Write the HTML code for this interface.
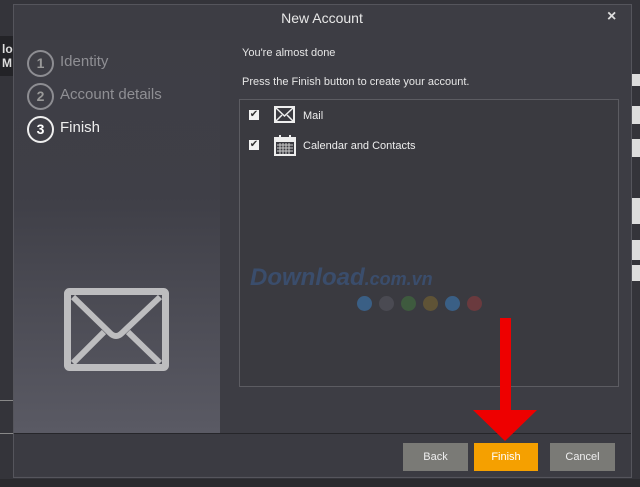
<!DOCTYPE html>
<html><head><style>
body{margin:0;width:640px;height:487px;background:#2b2b30;position:relative;overflow:hidden;font-family:"Liberation Sans",sans-serif;}
.a{position:absolute}
</style></head><body>
<div class="a" style="left:0;top:0;width:640px;height:487px;background:#34343a"></div>
<!-- background app bits -->
<div class="a" style="left:0;top:36px;width:14px;height:40px;background:#232327"></div>
<div class="a" style="left:2px;top:42px;color:#ddd;font-size:12px;font-weight:bold;line-height:14px">lo<br>M</div>
<div class="a" style="left:0;top:400px;width:14px;height:1px;background:#888"></div>
<div class="a" style="left:0;top:433px;width:14px;height:1px;background:#888"></div>
<div class="a" style="left:0;top:479px;width:640px;height:8px;background:#2a2a2e"></div>
<div class="a" style="left:631px;top:74px;width:9px;height:12px;background:#ddd"></div>
<div class="a" style="left:631px;top:106px;width:9px;height:18px;background:#ddd"></div>
<div class="a" style="left:631px;top:139px;width:9px;height:18px;background:#ddd"></div>
<div class="a" style="left:631px;top:198px;width:9px;height:26px;background:#ddd"></div>
<div class="a" style="left:631px;top:240px;width:9px;height:20px;background:#ddd"></div>
<div class="a" style="left:631px;top:265px;width:9px;height:16px;background:#ddd"></div>
<!-- dialog -->
<div class="a" style="left:13px;top:4px;width:617px;height:472px;background:#3d3d44;border:1px solid #55555c"></div>
<div class="a" style="left:13px;top:10px;width:618px;text-align:center;color:#e8e8e8;font-size:14px">New Account</div>
<div class="a" style="left:607px;top:8px;color:#ddd;font-size:16px;font-weight:bold">×</div>
<div class="a" style="left:14px;top:40px;width:206px;height:393px;background:linear-gradient(#3e3e45 0%,#3f3f47 40%,#5a5a64 100%)"></div>
<!-- steps -->
<div class="a" style="left:27px;top:50px;width:23px;height:23px;border:2px solid #8d8d92;border-radius:50%;color:#999;font-size:14px;font-weight:bold;text-align:center;line-height:23px">1</div>
<div class="a" style="left:60px;top:53px;color:#8f8f94;font-size:15px">Identity</div>
<div class="a" style="left:27px;top:83px;width:23px;height:23px;border:2px solid #8d8d92;border-radius:50%;color:#999;font-size:14px;font-weight:bold;text-align:center;line-height:23px">2</div>
<div class="a" style="left:60px;top:86px;color:#8f8f94;font-size:15px">Account details</div>
<div class="a" style="left:27px;top:116px;width:23px;height:23px;border:2px solid #eee;border-radius:50%;color:#fff;font-size:14px;font-weight:bold;text-align:center;line-height:23px">3</div>
<div class="a" style="left:60px;top:119px;color:#eee;font-size:15px">Finish</div>
<svg class="a" style="left:64px;top:288px" width="105" height="83" viewBox="0 0 105 83"><rect x="3.5" y="3.5" width="98" height="76" rx="2" fill="none" stroke="#bdbdbf" stroke-width="7"/><path d="M9 9 L46 45 Q52 51 58 45 L96 9 M9 75 L40 44 M96 75 L64 44" fill="none" stroke="#bdbdbf" stroke-width="6"/></svg>
<!-- right content -->
<div class="a" style="left:242px;top:47px;color:#e6e6e6;font-size:11px">You're almost done</div>
<div class="a" style="left:242px;top:76px;color:#e6e6e6;font-size:11px">Press the Finish button to create your account.</div>
<div class="a" style="left:239px;top:99px;width:378px;height:286px;border:1px solid #5c5c62;background:#3a3a40"></div>
<div class="a" style="left:249px;top:110px;width:10px;height:10px;background:#f2f2f2;color:#333;font-size:10px;line-height:10px;text-align:center">✔</div>
<svg class="a" style="left:274px;top:106px" width="21" height="17"><rect x="1" y="1" width="19" height="15" fill="none" stroke="#eee" stroke-width="2"/><path d="M2 2 L10.5 10 L19 2 M2 15 L8 9 M19 15 L13 9" stroke="#eee" stroke-width="1.5" fill="none"/></svg>
<div class="a" style="left:303px;top:110px;color:#eee;font-size:11px">Mail</div>
<div class="a" style="left:249px;top:140px;width:10px;height:10px;background:#f2f2f2;color:#333;font-size:10px;line-height:10px;text-align:center">✔</div>
<svg class="a" style="left:274px;top:135px" width="22" height="21"><rect x="1" y="3" width="20" height="17" fill="none" stroke="#eee" stroke-width="2"/><rect x="1" y="3" width="20" height="4" fill="#eee"/><rect x="5" y="0" width="2" height="5" fill="#eee"/><rect x="15" y="0" width="2" height="5" fill="#eee"/><path d="M3 10H19M3 13H19M3 16H19M6 8V19M9 8V19M12 8V19M15 8V19" stroke="#ccc" stroke-width="1"/></svg>
<div class="a" style="left:303px;top:140px;color:#eee;font-size:11px">Calendar and Contacts</div>
<!-- watermark -->
<div class="a" style="left:250px;top:264px;color:#3a5a8a;font-size:24px;font-weight:bold;font-style:italic;opacity:.6">Download<span style="font-size:18px">.com.vn</span></div>
<div class="a" style="left:357px;top:296px;width:15px;height:15px;border-radius:50%;background:#3a5f85"></div>
<div class="a" style="left:379px;top:296px;width:15px;height:15px;border-radius:50%;background:#4a4a52"></div>
<div class="a" style="left:401px;top:296px;width:15px;height:15px;border-radius:50%;background:#3e5a3e"></div>
<div class="a" style="left:423px;top:296px;width:15px;height:15px;border-radius:50%;background:#5f5336"></div>
<div class="a" style="left:445px;top:296px;width:15px;height:15px;border-radius:50%;background:#3a5f85"></div>
<div class="a" style="left:467px;top:296px;width:15px;height:15px;border-radius:50%;background:#6a3a3e"></div>
<!-- footer -->
<div class="a" style="left:14px;top:433px;width:617px;height:1px;background:#26262a"></div>
<div class="a" style="left:14px;top:434px;width:617px;height:42px;background:#3b3b42"></div>
<div class="a" style="left:403px;top:443px;width:65px;height:28px;background:#7a7a76;color:#eee;font-size:11px;text-align:center;line-height:28px">Back</div>
<div class="a" style="left:474px;top:443px;width:64px;height:28px;background:#f5a000;color:#fff;font-size:11px;text-align:center;line-height:28px">Finish</div>
<div class="a" style="left:550px;top:443px;width:65px;height:28px;background:#7a7a76;color:#eee;font-size:11px;text-align:center;line-height:28px">Cancel</div>
<!-- arrow -->
<svg class="a" style="left:470px;top:318px" width="70" height="125"><rect x="30" y="0" width="11" height="92" fill="#ee0000"/><path d="M3 92 H67 L35 123 Z" fill="#ee0000"/></svg>
</body></html>
